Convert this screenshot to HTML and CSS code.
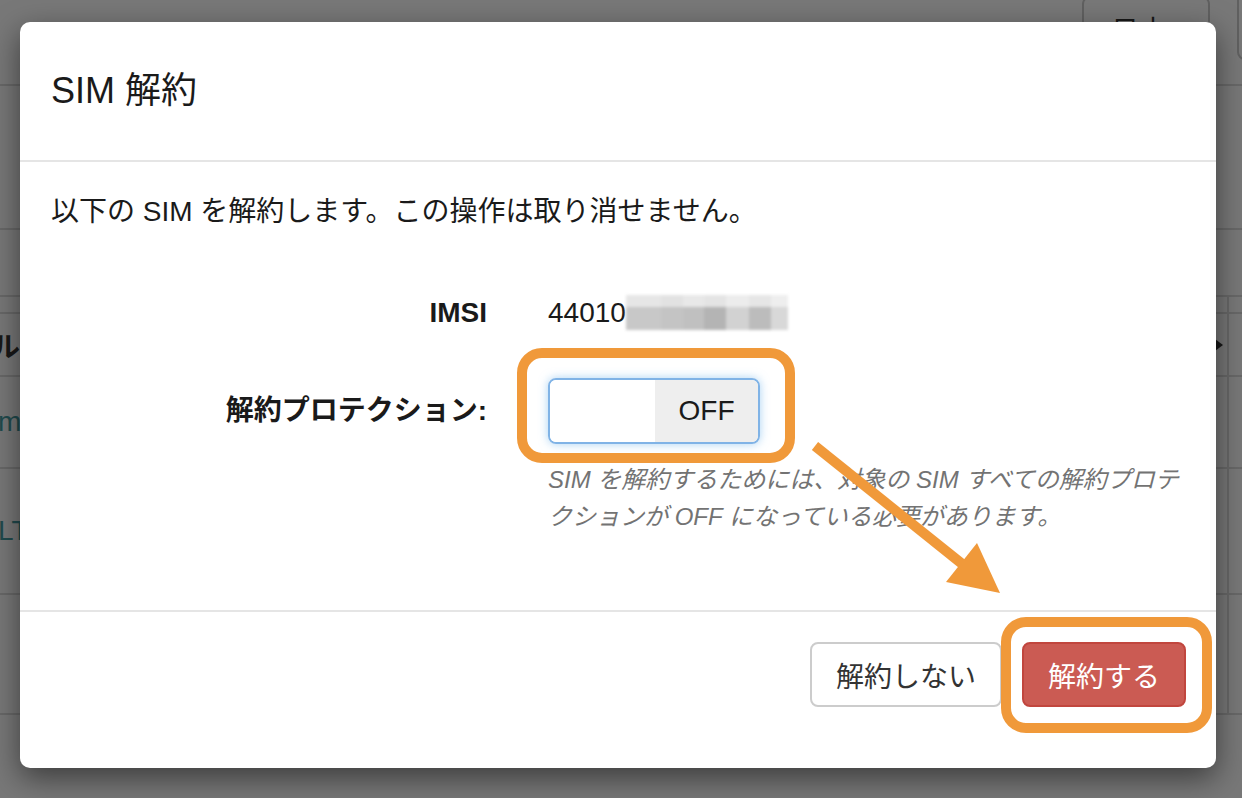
FILE: index.html
```html
<!DOCTYPE html>
<html lang="ja">
  <head>
    <meta charset="UTF-8" />
    <meta name="viewport" content="width=device-width, initial-scale=1.0" />
    <title>SIM 解約</title>
    <link rel="stylesheet" href="styles.css">
  </head>
  <body>
    <div class="page">
      <header class="topbar">
        <button class="lang">日本</button>
        <span class="user"></span>
      </header>
      <div class="table">
        <div class="tr tr-a"></div>
        <div class="tr tr-b"></div>
        <div class="tr tr-c"><span class="cell-end"></span></div>
        <div class="tr tr-head">
          <span class="th">ルール</span>
          <span class="caret"></span>
          <span class="cell-end"></span>
        </div>
        <div class="tr tr-d">
          <a class="link">mobile-01</a>
          <span class="cell-end"></span>
        </div>
        <div class="tr tr-e">
          <a class="link">LTE-M</a>
          <span class="cell-end"></span>
        </div>
        <div class="tr tr-f"><span class="cell-end"></span></div>
      </div>
    </div>

    <div class="backdrop"></div>

    <div class="modal">
      <div class="modal-header">
        <h4 class="modal-title">SIM 解約</h4>
      </div>
      <div class="modal-body">
        <p class="lead">以下の SIM を解約します。この操作は取り消せません。</p>
        <div class="form">
          <div class="form-row">
            <label class="form-label">IMSI</label>
            <div class="form-value">
              44010<span class="mask"><i class="m1"></i><i class="m2"></i><i class="m3"></i><i class="m4"></i><i class="m5"></i><i class="m6"></i><i class="m7"></i></span>
            </div>
          </div>
          <div class="form-row form-row-switch">
            <label class="form-label form-label-tall">解約プロテクション:</label>
            <div class="form-value">
              <div class="switch">
                <span class="switch-blank"></span>
                <span class="switch-off">OFF</span>
              </div>
              <p class="help">SIM を解約するためには、対象の SIM すべての解約プロテクションが OFF になっている必要があります。</p>
            </div>
          </div>
        </div>
      </div>
      <div class="modal-footer">
        <button class="btn btn-default">解約しない</button>
        <button class="btn btn-danger">解約する</button>
      </div>
    </div>

    <svg class="marks" width="1242" height="798" viewBox="0 0 1242 798">
      <rect x="522" y="353" width="268" height="105" rx="20" fill="none" stroke="#f0993a" stroke-width="10" />
      <rect x="1006" y="622" width="201" height="106" rx="20" fill="none" stroke="#f0993a" stroke-width="10" />
      <line x1="815" y1="446" x2="966" y2="567" stroke="#f0993a" stroke-width="10" />
      <polygon points="977,543 946,582 1000,593" fill="#f0993a" />
    </svg>
  </body>
</html>
```

FILE: styles.css
```css
*,
*::before,
*::after {
  box-sizing: border-box;
}

body {
  margin: 0;
  width: 1242px;
  height: 798px;
  overflow: hidden;
  position: relative;
  font-family: 'Liberation Sans', 'Noto Sans CJK JP', sans-serif;
  background: #fff;
  color: #333;
}

/* page behind the dialog */
.page {
  font-size: 28px;
}
.topbar {
  height: 86px;
  border-bottom: 2px solid #ddd;
  display: flex;
  justify-content: flex-end;
  align-items: flex-start;
  gap: 27px;
}
.lang {
  width: 128px;
  height: 66px;
  margin-top: -4px;
  padding: 0 0 0 27px;
  text-align: left;
  border: 2px solid #ccc;
  border-radius: 8px;
  background: #fff;
  font-family: inherit;
  font-size: 28px;
  color: #333;
}
.user {
  width: 40px;
  height: 60px;
  margin-right: -35px;
  border: 2px solid #ccc;
  border-top: none;
  border-radius: 0 0 8px 8px;
}
.table {
  margin-left: -2px;
}
.tr {
  display: flex;
  align-items: center;
  border-bottom: 2px solid #ddd;
}
.tr-a { height: 144px; }
.tr-b { height: 67px; }
.tr-c { height: 17px; }
.tr-head { height: 63px; }
.tr-d { height: 92px; }
.tr-e { height: 126px; }
.tr-f { height: 120px; }
.cell-end {
  margin-left: auto;
  align-self: stretch;
  width: 15px;
  border-left: 2px solid #ddd;
}
.th {
  margin-left: -6px;
  font-weight: bold;
  color: #333;
}
.link {
  color: #459ea3;
}
.caret {
  margin-left: auto;
  width: 0;
  height: 0;
  border-top: 6px solid transparent;
  border-bottom: 6px solid transparent;
  border-left: 8px solid #333;
  margin-right: 4px;
}
.caret + .cell-end {
  margin-left: 0;
}

.backdrop {
  position: absolute;
  inset: 0;
  background: rgba(0, 0, 0, 0.53);
}

/* dialog */
.modal {
  position: absolute;
  left: 20px;
  top: 22px;
  width: 1196px;
  background: #fff;
  border-radius: 10px;
  box-shadow: 0 10px 30px rgba(0, 0, 0, 0.5);
  color: #1a1a1a;
}
.modal-header {
  height: 140px;
  padding: 0 31px;
  display: flex;
  align-items: center;
  border-bottom: 2px solid #e5e5e5;
}
.modal-title {
  margin: 0;
  font-size: 36px;
  font-weight: normal;
  line-height: 50px;
}
.modal-body {
  padding: 30px 31px 75px;
}
.lead {
  margin: 0;
  font-size: 28px;
  line-height: 40px;
}
.form {
  margin-top: 61px;
}
.form-row {
  display: grid;
  grid-template-columns: 436px 1fr;
  column-gap: 61px;
  align-items: start;
}
.form-row-switch {
  margin-top: 45px;
}
.form-label {
  text-align: right;
  font-size: 28px;
  font-weight: bold;
  line-height: 40px;
}
.form-label-tall {
  line-height: 66px;
}
.form-value {
  font-size: 28px;
  line-height: 40px;
}
.mask {
  display: inline-flex;
  vertical-align: -8px;
  height: 35px;
  filter: blur(1.5px);
}
.mask i {
  display: block;
  width: 23px;
  background: linear-gradient(var(--top) 0 34%, var(--bottom) 34%);
}
.mask .m1 { --top: #e6e6e6; --bottom: #c8c8c8; width: 35px; }
.mask .m2 { --top: #e2e2e2; --bottom: #c4c4c4; width: 22px; }
.mask .m3 { --top: #e8e8e8; --bottom: #c0c0c0; width: 21px; }
.mask .m4 { --top: #e4e4e4; --bottom: #b4b4b4; width: 22px; }
.mask .m5 { --top: #ececec; --bottom: #d2d2d2; width: 23px; }
.mask .m6 { --top: #e6e6e6; --bottom: #bcbcbc; width: 22px; }
.mask .m7 { --top: #eeeeee; --bottom: #d8d8d8; width: 17px; }

.switch {
  display: flex;
  width: 212px;
  height: 66px;
  border: 2px solid #80b3e6;
  border-radius: 8px;
  overflow: hidden;
  box-shadow: 0 0 10px rgba(102, 175, 233, 0.55);
}
.switch-blank {
  width: 105px;
  background: #fff;
}
.switch-off {
  flex: 1;
  display: flex;
  align-items: center;
  justify-content: center;
  background: #eee;
  color: #1a1a1a;
  font-size: 28px;
}
.help {
  margin: 17px 0 0;
  font-size: 24px;
  line-height: 37px;
  font-style: italic;
  color: #737373;
}

.modal-footer {
  padding: 30px 30px 61px;
  border-top: 2px solid #e5e5e5;
  display: flex;
  justify-content: flex-end;
  gap: 20px;
}
.btn {
  height: 65px;
  padding: 0 24px;
  border: 2px solid #ccc;
  border-radius: 8px;
  font-family: inherit;
  font-size: 28px;
  background: #fff;
  color: #333;
}
.btn-danger {
  background: #cb5b53;
  border-color: #c1463e;
  color: #fff;
}

.marks {
  position: absolute;
  left: 0;
  top: 0;
  pointer-events: none;
}
```
